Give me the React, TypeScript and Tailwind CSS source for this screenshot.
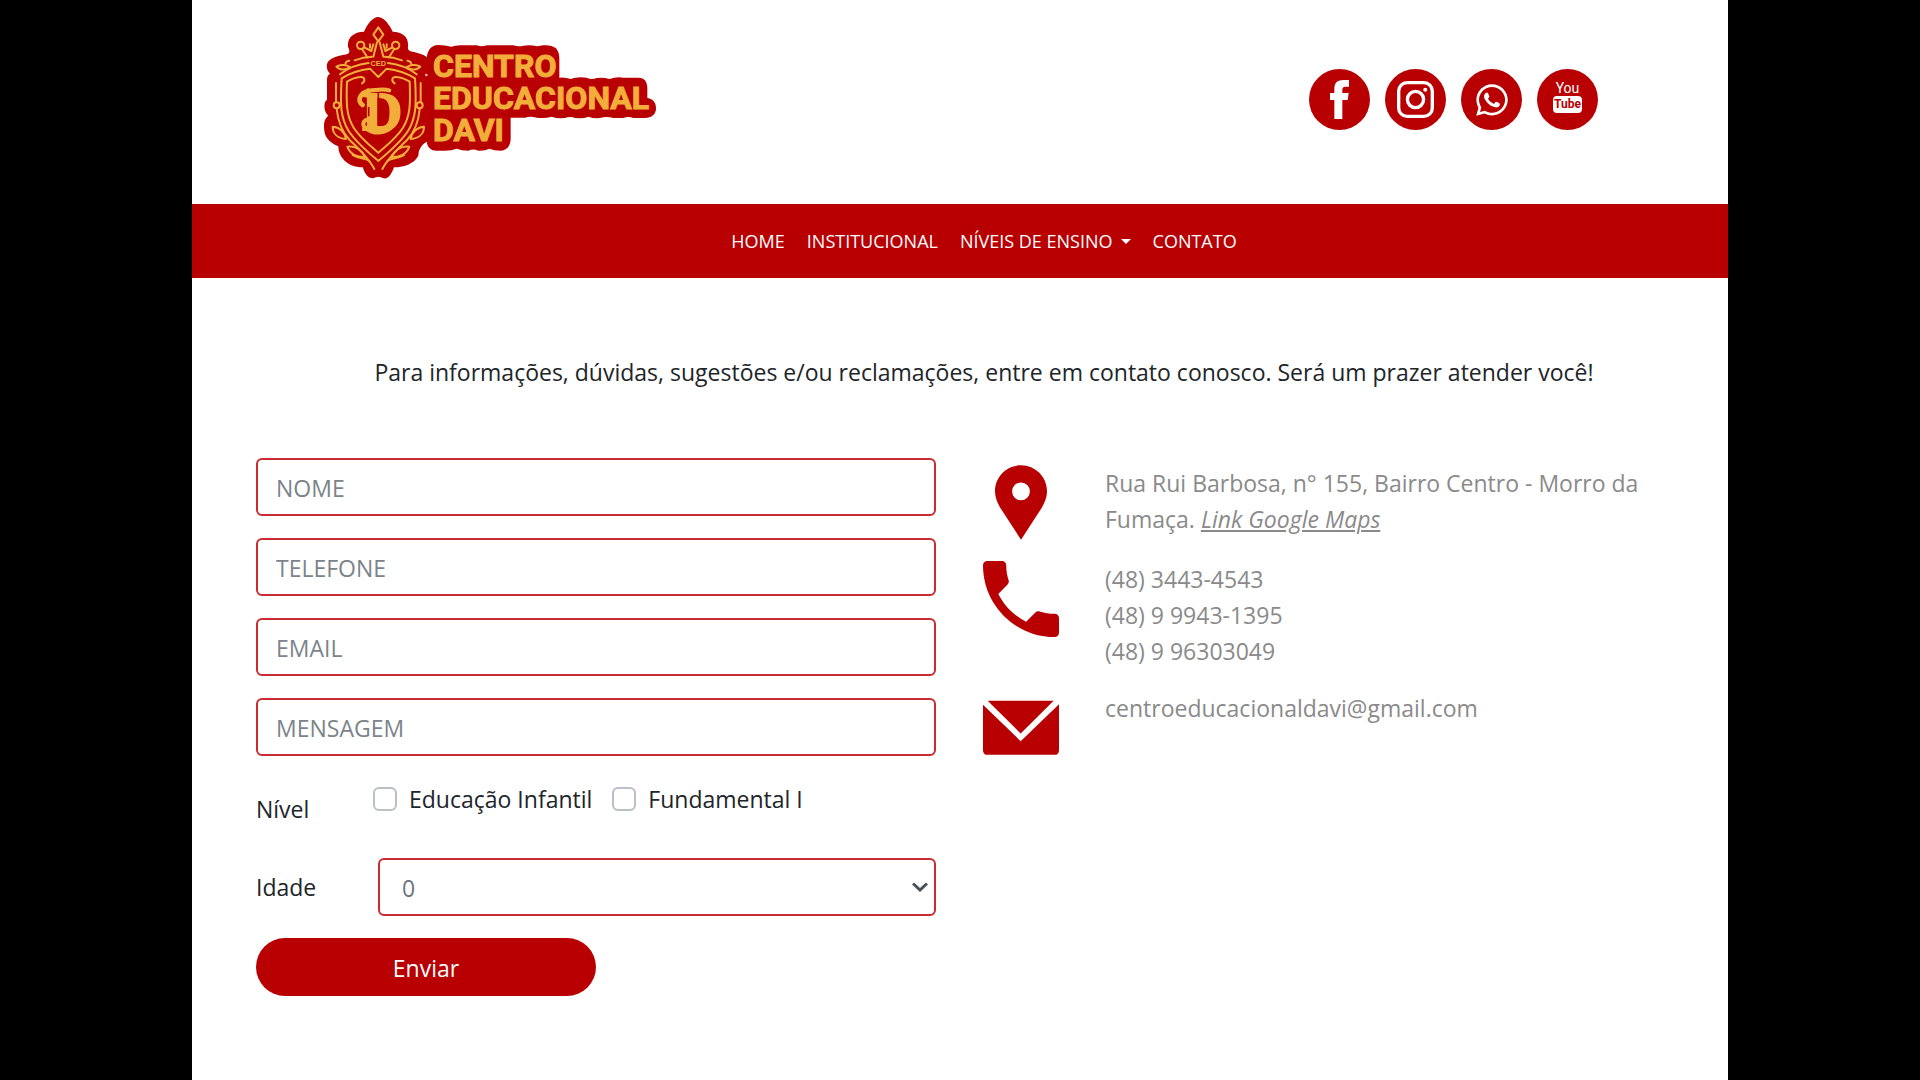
import type { ReactNode } from 'react';
import { FaWhatsapp } from 'react-icons/fa';

const GOLD = '#f2ae3a';
const RED = '#b80003';

function Crest() {
  return (
    <g>
      <path
        fill={RED}
        d="M205 36C222 36 240 62 248 80C278 80 297 97 294 125C292 136 300 139 312 141C335 147 350 152 358 165L362 405C345 411 326 424 325 452C312 476 285 486 252 487C245 506 236 523 220 520C210 514 200 514 190 520C172 520 165 506 158 487C120 488 85 462 85 424C55 410 42 395 42 365C42 350 45 340 55 332C40 320 40 290 51 284V225C51 215 54 209 60 206C48 196 48 176 56 168C70 155 90 152 110 148C122 143 118 135 114 125C111 96 134 80 162 80C172 58 188 36 205 36Z"
      />
      <circle cx="349" cy="210" r="4" fill="#fff" opacity="0.7" />
      <g fill="none" stroke={GOLD} strokeWidth="6" strokeLinecap="round" strokeLinejoin="round">
        <path d="M205 67L220 89L205 109L190 89Z" />
        <circle cx="152" cy="121" r="11" />
        <circle cx="257" cy="121" r="11" />
        <path d="M156 132L172 157M253 132L237 157M164 128L184 138L190 118M246 128L226 138L220 118M180 118V128M230 118V128" />
        <path d="M201 112L190 155M209 112L220 155" />
        <path d="M134 166Q160 156 186 155M224 155Q250 156 276 166" />
        <path d="M90 208C112 190 142 178 176 174M320 208C298 190 268 178 234 174" />
        <path d="M79 185C92 176 110 180 120 186C106 196 88 196 79 185ZM106 179C106 172 110 168 118 167M331 185C318 176 300 180 290 186C304 196 322 196 331 185ZM304 179C304 172 300 168 292 167" />
        <path d="M205 216L180 191C150 194 120 204 95 220C90 300 92 340 116 378C138 412 172 440 205 468C238 440 272 412 294 378C318 340 320 300 315 220C290 204 260 194 230 191Z" />
        <path d="M156 235C168 228 164 214 150 216C136 217 124 222 111 230C108 300 110 334 131 368C150 398 178 420 205 443C232 420 260 398 279 368C300 334 302 300 299 230C286 222 274 217 260 216C246 214 242 228 254 235" />
        <path d="M78 234V290M332 234V290" />
        <circle cx="80" cy="301" r="9" />
        <circle cx="329" cy="301" r="9" />
        <path d="M80 312C84 350 96 380 118 404C150 434 178 462 193 492M329 312C326 350 314 380 292 404C260 434 232 462 217 492" />
        <path d="M68 365C88 366 104 380 108 402C86 400 68 388 68 365ZM112 425C134 422 154 434 166 456C142 458 120 448 112 425ZM128 450C150 462 168 460 178 468M342 365C322 366 306 380 302 402C324 400 342 388 342 365ZM298 425C276 422 256 434 244 456C268 458 290 448 298 425ZM282 450C260 462 242 460 232 468" />
      </g>
      <text x="205" y="182" textAnchor="middle" fill={GOLD} className="font-['Liberation_Sans'] text-[22px] font-bold">
        CED
      </text>
      <text
        x="217"
        y="374"
        textAnchor="middle"
        fill={GOLD}
        stroke={GOLD}
        strokeWidth="6"
        className="font-['Liberation_Serif'] text-[166px] font-bold"
      >
        D
      </text>
      <g fill="none" stroke={GOLD} strokeLinecap="round">
        <path strokeWidth="12" d="M238 256C214 248 190 258 174 256" />
        <path strokeWidth="14" d="M176 258C150 262 140 288 158 300" />
        <path strokeWidth="12" d="M184 346C158 338 154 362 168 370C190 388 226 388 250 362" />
      </g>
      <path d="M205 262L205 362M176 306V334" fill="none" stroke={RED} strokeWidth="5" />
    </g>
  );
}

function Logo() {
  return (
    <svg viewBox="42 36 996 486" className="h-[162px] w-[332px]" role="img" aria-label="Centro Educacional Davi">
      <path
        fill={RED}
        d="M350 165C350 138 362 121 384 120Q405 120 424 125Q440 119 460 121H500Q515 127 530 121H610Q625 126 640 122Q660 119 682 124C700 119 725 118 738 130Q748 142 748 160V218Q765 216 782 222Q800 215 830 218Q845 226 860 219Q880 216 898 222Q920 215 940 218H985C1005 218 1012 232 1012 250V279C1030 282 1038 294 1038 310C1038 328 1025 339 1005 339H970Q955 333 940 339H910Q890 333 870 339Q850 341 836 335Q820 341 795 339Q780 333 765 339Q740 341 725 335Q705 341 680 338Q660 332 645 338H602V400C602 422 592 435 572 437Q552 437 538 431Q525 438 505 437Q490 430 475 437Q455 437 440 431Q425 437 405 437H380C360 437 350 425 350 405Z"
      />
      <Crest />
      <g fill={GOLD} stroke={GOLD} strokeWidth="3" className="font-[Roboto,sans-serif] text-[96px] font-bold">
        <text x="369" y="216">CENTRO</text>
        <text x="369" y="312">EDUCACIONAL</text>
        <text x="369" y="408">DAVI</text>
      </g>
    </svg>
  );
}

function Social({ label, children }: { label: string; children: ReactNode }) {
  return (
    <a
      href="#"
      aria-label={label}
      className="flex size-[61px] items-center justify-center rounded-full bg-[#b80003] text-white"
    >
      {children}
    </a>
  );
}

function Header() {
  return (
    <header className="flex h-[204px] items-start justify-between pr-[130px] pl-[132px]">
      <a href="#" className="pt-[17px]">
        <Logo />
      </a>
      <div className="flex gap-[15px] pt-[69px]">
        <Social label="Facebook">
          <svg viewBox="0 0 57 117" className="h-[39px] w-[19px]" fill="currentColor">
            <path d="M13 117V60H0V39H13V27C13 8 23 0 40 0H57V20H46C40 20 37 23 37 29V39H56L53 60H37V117Z" />
          </svg>
        </Social>
        <Social label="Instagram">
          <svg viewBox="0 0 110 110" className="size-[37px]" fill="none" stroke="currentColor" strokeWidth="10">
            <rect x="5" y="5" width="100" height="100" rx="25" />
            <circle cx="55" cy="55" r="24" />
            <circle cx="84" cy="26" r="6" fill="currentColor" stroke="none" />
          </svg>
        </Social>
        <Social label="WhatsApp">
          <FaWhatsapp className="size-9" />
        </Social>
        <Social label="YouTube">
          <span className="-mt-1.5 flex flex-col items-center font-['Roboto',sans-serif]">
            <span className="text-[14px] leading-[15px]">You</span>
            <span className="rounded-sm bg-white px-px text-[12px] leading-[17px] font-bold text-[#b80003]">Tube</span>
          </span>
        </Social>
      </div>
    </header>
  );
}

function Nav() {
  return (
    <nav className="flex h-[74px] items-center justify-center gap-[22px] bg-[#b80003] pl-12 text-[18px] text-white">
      <a href="#">HOME</a>
      <a href="#">INSTITUCIONAL</a>
      <button type="button" className="flex items-center gap-2">
        NÍVEIS DE ENSINO
        <span className="border-x-[5px] border-t-[5px] border-x-transparent border-t-white" />
      </button>
      <a href="#">CONTATO</a>
    </nav>
  );
}

function Field({ label, type }: { label: string; type: string }) {
  return (
    <input
      type={type}
      aria-label={label}
      placeholder={label}
      className="h-[58px] w-full rounded-md border-2 border-[#cb2b30] bg-white px-[18px] pt-0.5 text-[#6c757d] outline-none placeholder:text-[#7c848b]"
    />
  );
}

function Check({ label }: { label: string }) {
  return (
    <label className="flex items-center gap-3">
      <input
        type="checkbox"
        className="size-6 appearance-none rounded-md border-2 border-[#b9c0c8] bg-white checked:bg-[#b80003]"
      />
      {label}
    </label>
  );
}

function ContactForm() {
  return (
    <form className="flex flex-col gap-[22px] px-6" onSubmit={(e) => e.preventDefault()}>
      <Field label="NOME" type="text" />
      <Field label="TELEFONE" type="tel" />
      <Field label="EMAIL" type="email" />
      <Field label="MENSAGEM" type="text" />
      <fieldset className="flex h-[58px]" aria-labelledby="nivel">
        <span id="nivel" className="w-[117px] pt-3.5">
          Nível
        </span>
        <div className="flex items-start gap-5 pt-1">
          <Check label="Educação Infantil" />
          <Check label="Fundamental I" />
        </div>
      </fieldset>
      <div className="flex items-center">
        <label htmlFor="idade" className="w-[122px]">
          Idade
        </label>
        <div className="relative flex-1">
          <select
            id="idade"
            className="h-[58px] w-full appearance-none rounded-md border-2 border-[#cb2b30] bg-white px-[22px] pt-0.5 text-[#6c757d] outline-none"
          >
            <option>0</option>
            <option>1</option>
            <option>2</option>
            <option>3</option>
            <option>4</option>
            <option>5</option>
          </select>
          <svg
            viewBox="0 0 16 10"
            className="pointer-events-none absolute top-6 right-2 h-[10px] w-4"
            fill="none"
            stroke="#495057"
            strokeWidth="3"
          >
            <path d="M1 1.5L8 8L15 1.5" />
          </svg>
        </div>
      </div>
      <button type="submit" className="h-[58px] w-1/2 rounded-full bg-[#b80003] pt-0.5 text-white">
        Enviar
      </button>
    </form>
  );
}

function ContactRow({ icon, children }: { icon: ReactNode; children: ReactNode }) {
  return (
    <div className="flex gap-[46px]">
      <div className="flex w-[76px] shrink-0 items-start justify-center">{icon}</div>
      <div className="flex-1">{children}</div>
    </div>
  );
}

function ContactInfo() {
  return (
    <address className="flex flex-col gap-[21px] px-[23px] pt-[7px] leading-9 text-[#8a8a8a] not-italic">
      <ContactRow
        icon={
          <svg viewBox="5 2 14 20" className="h-[75px] w-[52px]" fill={RED}>
            <path d="M12 2C8.13 2 5 5.13 5 9c0 1.6.6 3.1 1.4 4.4L12 22l5.6-8.6C18.4 12.1 19 10.6 19 9c0-3.87-3.13-7-7-7zm0 9.4a2.4 2.4 0 1 1 0-4.8 2.4 2.4 0 0 1 0 4.8z" />
          </svg>
        }
      >
        <p>
          Rua Rui Barbosa, n° 155, Bairro Centro - Morro da Fumaça.{' '}
          <a href="#" className="italic underline">
            Link Google Maps
          </a>
        </p>
      </ContactRow>
      <ContactRow
        icon={
          <svg viewBox="3 3 18 18" className="size-[76px]" fill={RED}>
            <path d="M6.62 10.79c1.44 2.83 3.76 5.14 6.59 6.59l2.2-2.2c.27-.27.67-.36 1.02-.24 1.12.37 2.33.57 3.57.57.55 0 1 .45 1 1V20c0 .55-.45 1-1 1-9.39 0-17-7.61-17-17 0-.55.45-1 1-1h3.5c.55 0 1 .45 1 1 0 1.25.2 2.45.57 3.57.11.35.03.74-.25 1.02l-2.2 2.2z" />
          </svg>
        }
      >
        <p>(48) 3443-4543</p>
        <p>(48) 9 9943-1395</p>
        <p>(48) 9 96303049</p>
      </ContactRow>
      <ContactRow
        icon={
          <svg viewBox="0 0 228 164" className="mt-2.5 h-[55px] w-[76px]" fill={RED}>
            <path d="M14 2H212L113 100Z" />
            <path d="M0 14L113 123L228 12V150Q228 164 214 164H14Q0 164 0 150Z" />
          </svg>
        }
      >
        <p>centroeducacionaldavi@gmail.com</p>
      </ContactRow>
    </address>
  );
}

export default function App() {
  return (
    <div className="min-h-screen bg-black font-['Open_Sans',sans-serif]">
      <div className="mx-auto min-h-screen w-4/5 bg-white">
        <Header />
        <Nav />
        <main className="px-10 pt-[76px] text-[23px] text-[#212529]">
          <p className="pl-12 text-center leading-9">
            Para informações, dúvidas, sugestões e/ou reclamações, entre em contato conosco. Será um prazer atender
            você!
          </p>
          <div className="grid grid-cols-2 pt-[68px]">
            <ContactForm />
            <ContactInfo />
          </div>
        </main>
      </div>
    </div>
  );
}
